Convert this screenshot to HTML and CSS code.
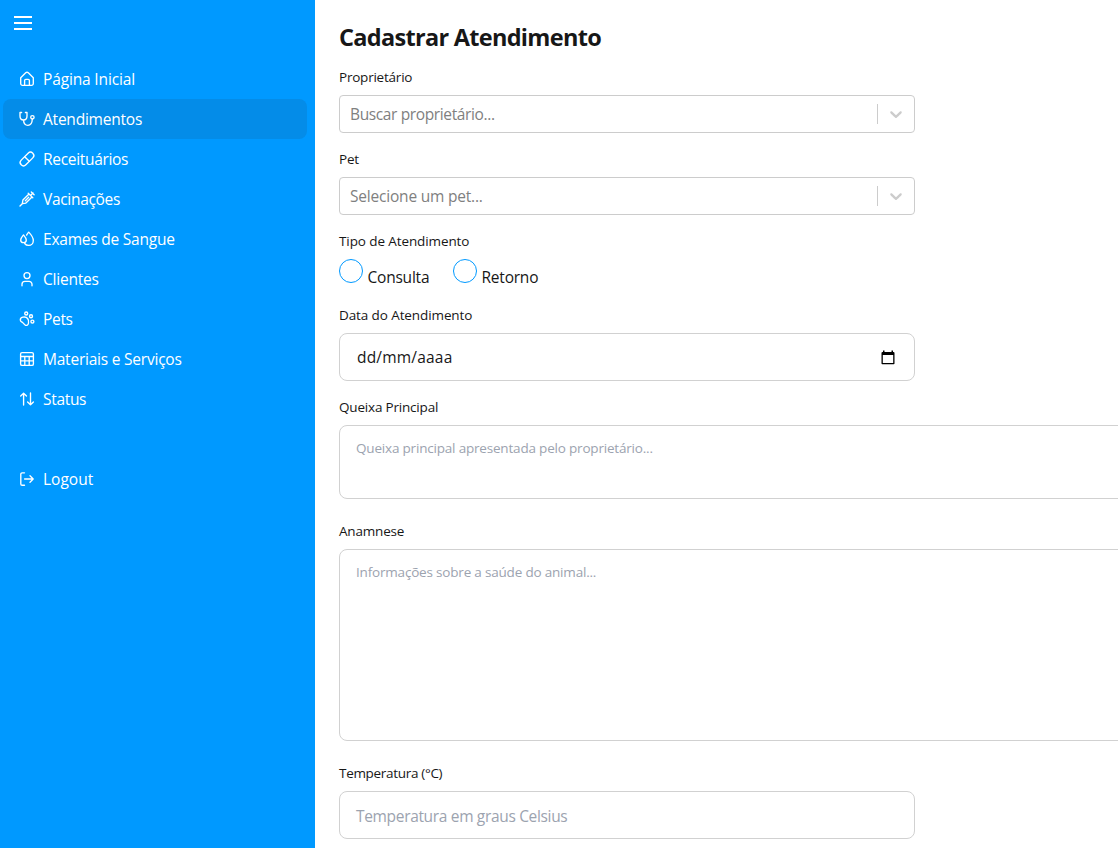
FILE: index.html
```html
<!DOCTYPE html>
<html lang="pt-BR">
<head>
<meta charset="utf-8">
<title>Cadastrar Atendimento</title>
<link rel="stylesheet" href="styles.css">
</head>
<body>
<div class="layout">
  <aside class="sidebar">
    <button class="menu-toggle" aria-label="Menu"><span></span><span></span><span></span></button>
    <nav class="nav">
      <a class="nav-item"><svg class="icon" viewBox="0 0 16 16"><path d="M1.700 6.800 6.700 1.800a1.900 1.900 0 0 1 2.600 0l5 5V12.600a1.800 1.800 0 0 1-1.800 1.800h-9a1.800 1.800 0 0 1-1.800-1.800Z"/><path d="M5.600 14.400V9.600a1.200 1.200 0 0 1 1.200-1.200h2.400a1.200 1.200 0 0 1 1.200 1.200v4.800"/></svg><span>Página Inicial</span></a>
      <a class="nav-item active"><svg class="icon" viewBox="0 0 16 16"><path d="M2.600 1.500H1V5c0 2.500 1.500 4 3.500 4S8 7.500 8 5V1.500H6.400M4.500 9c.2 3.300 1.800 5.300 4.400 5.300 2.700 0 4.200-2 4.400-6.100"/><circle cx="13.400" cy="6.300" r="1.700"/></svg><span class="snug">Atendimentos</span></a>
      <a class="nav-item"><svg class="icon" viewBox="0 0 16 16"><g transform="rotate(-45 8 8)"><rect x="-.2" y="4.700" width="16.400" height="6.600" rx="3.300"/><path d="M8 4.700v6.600"/></g></svg><span class="tight">Receituários</span></a>
      <a class="nav-item"><svg class="icon" viewBox="0 0 16 16"><path d="M1 15 3.300 12.700M3.300 12.700 3.900 9.100 10 3 13 6 6.900 12.100ZM9.200 2.200 13.800 6.800M11.500 4.500 14 2M12.300.9 15.100 3.700M6.300 9.700 9.700 6.300"/></svg><span class="tight">Vacinações</span></a>
      <a class="nav-item"><svg class="icon" viewBox="0 0 16 16"><path d="M4.500 4C3 5.800 1.700 7.300 1.700 8.900a2.800 2.800 0 0 0 5.600 0C7.300 7.300 6 5.800 4.500 4Z"/><path d="M7.600 4.100C8.200 3 8.900 2 9.700 1.100c2.500 2.600 4.600 5.400 4.600 8.300 0 3-2 5-4.600 5-1.700 0-3.200-.8-4-1.900"/></svg><span class="snug">Exames de Sangue</span></a>
      <a class="nav-item"><svg class="icon" viewBox="0 0 16 16"><circle cx="8" cy="4.600" r="3"/><path d="M3 14.800v-1.600a2.900 2.900 0 0 1 2.900-2.900h4.200a2.900 2.900 0 0 1 2.900 2.900v1.600"/></svg><span class="snug">Clientes</span></a>
      <a class="nav-item"><svg class="icon" viewBox="0 0 16 16"><circle cx="7.200" cy="2.500" r="1.500"/><circle cx="12" cy="5.200" r="1.500"/><circle cx="13.400" cy="10.600" r="1.500"/><path d="M3.800 6.200c2-.5 3.700 0 4.800 1.300 1.100 1.400 1.200 2.900.9 4.500-.3 1.800-1.500 2.800-2.900 2.300-1.200-.4-1.600-1.600-2.500-2.400C3.200 11 1.700 10.800 1.400 9.300c-.3-1.400.8-2.700 2.400-3.100Z"/></svg><span class="tight">Pets</span></a>
      <a class="nav-item"><svg class="icon" viewBox="0 0 16 16"><rect x="1.600" y="1.600" width="12.800" height="12.800" rx="1.500"/><path d="M1.600 5.500h12.800M1.600 9.900h12.800M5.800 5.500v8.900M10.200 5.500v8.900"/></svg><span class="snug">Materiais e Serviços</span></a>
      <a class="nav-item"><svg class="icon" viewBox="0 0 16 16"><path d="M4.600 14V2.200M1.700 5.100l2.900-2.900 2.900 2.900M11.500 2v11.800M8.600 10.900l2.900 2.900 2.900-2.900"/></svg><span class="tight">Status</span></a>
      <a class="nav-item logout"><svg class="icon" viewBox="0 0 16 16"><path d="M5.500 1.800H3.100a1.300 1.300 0 0 0-1.300 1.300v9.800a1.300 1.300 0 0 0 1.300 1.300h2.400M5.600 8h8.600M11 4.800 14.200 8 11 11.200"/></svg><span class="wide">Logout</span></a>
    </nav>
  </aside>
  <main class="content">
    <h1>Cadastrar Atendimento</h1>
    <label class="label snug">Proprietário</label>
    <div class="select"><span class="select-text owner">Buscar proprietário...</span><i class="divider"></i><svg class="chevron" viewBox="0 0 20 20"><path d="M4.516 7.548c0.436-0.446 1.043-0.481 1.576 0l3.908 3.747 3.908-3.747c0.533-0.481 1.141-0.446 1.574 0 0.436 0.445 0.408 1.197 0 1.615-0.406 0.418-4.695 4.502-4.695 4.502-0.217 0.223-0.502 0.335-0.787 0.335s-0.570-0.112-0.789-0.335c0 0-4.287-4.084-4.695-4.502s-0.436-1.170 0-1.615z"/></svg></div>
    <label class="label snug">Pet</label>
    <div class="select"><span class="select-text">Selecione um pet...</span><i class="divider"></i><svg class="chevron" viewBox="0 0 20 20"><path d="M4.516 7.548c0.436-0.446 1.043-0.481 1.576 0l3.908 3.747 3.908-3.747c0.533-0.481 1.141-0.446 1.574 0 0.436 0.445 0.408 1.197 0 1.615-0.406 0.418-4.695 4.502-4.695 4.502-0.217 0.223-0.502 0.335-0.787 0.335s-0.570-0.112-0.789-0.335c0 0-4.287-4.084-4.695-4.502s-0.436-1.170 0-1.615z"/></svg></div>
    <label class="label">Tipo de Atendimento</label>
    <div class="radios">
      <label class="radio consulta"><i class="circle"></i><span>Consulta</span></label>
      <label class="radio"><i class="circle"></i><span>Retorno</span></label>
    </div>
    <label class="label">Data do Atendimento</label>
    <div class="field date"><span>dd/mm/aaaa</span><svg class="calendar" viewBox="0 0 14 15"><path fill-rule="evenodd" d="M2 .5h1.500V2h7V.5H12V2h.5a1 1 0 0 1 1 1v10.500a.8.8 0 0 1-.8.8H1.300a.8.8 0 0 1-.8-.8V3a1 1 0 0 1 1-1H2ZM1.800 5v8h10.400V5Z"/></svg></div>
    <label class="label queixa">Queixa Principal</label>
    <div class="area short">Queixa principal apresentada pelo proprietário...</div>
    <label class="label queixa">Anamnese</label>
    <div class="area tall">Informações sobre a saúde do animal...</div>
    <label class="label tight">Temperatura (°C)</label>
    <div class="field temp"><span>Temperatura em graus Celsius</span></div>
  </main>
</div>
</body>
</html>
```
FILE: styles.css
```css
* { box-sizing: border-box; }
body { margin: 0; height: 848px; overflow: hidden; background: #fff; color: #171717; font: 16px/24px "Segoe UI", "Open Sans", "Noto Sans", sans-serif; }
.layout { display: flex; height: 848px; overflow: hidden; }
.sidebar { width: 315px; flex: none; background: #0099ff; color: #fff; padding: 16px 8px 0 3px; }
.menu-toggle { display: flex; flex-direction: column; gap: 4px; width: 18px; margin: 0 0 29px 11px; padding: 0; border: 0; background: none; }
.menu-toggle span { height: 2px; background: #fff; }
.nav { display: flex; flex-direction: column; }
.nav-item { display: flex; align-items: center; gap: 8px; height: 40px; padding-left: 16px; border-radius: 8px; font-size: 15.500px; letter-spacing: -.15px; white-space: nowrap; }
.nav-item.active { background: #048ce8; }
.logout { margin-top: 40px; }
.icon { width: 16px; height: 16px; flex: none; overflow: visible; fill: none; stroke: #fff; stroke-width: 1.350; stroke-linecap: round; stroke-linejoin: round; }
.content { width: 827px; flex: none; padding: 21px 0 0 24px; }
h1 { margin: 0 0 14px; font-size: 23.500px; line-height: 32px; font-weight: 700; letter-spacing: -.7px; white-space: nowrap; }
.label { display: block; height: 20px; margin-bottom: 8px; font-size: 13.500px; line-height: 20px; letter-spacing: -.1px; }
.select { display: flex; align-items: center; width: 576px; height: 38px; margin-bottom: 16px; padding-left: 10px; border: 1px solid #ccc; border-radius: 4px; color: #808080; font-size: 15.500px; letter-spacing: -.2px; }
.select-text { flex: 1; }
.owner { letter-spacing: -.37px; }
.divider { width: 1px; height: 20px; background: #ccc; }
.chevron { width: 20px; height: 20px; margin: 0 8px; fill: #ccc; }
.radios { display: flex; gap: 24px; height: 38px; margin-bottom: 8px; }
.radio { display: flex; gap: 4.500px; font-size: 15.500px; letter-spacing: -.22px; }
.radio span { padding-top: 6px; }
.consulta { width: 90px; }
.circle { width: 24px; height: 24px; flex: none; border: 1px solid #0099ff; border-radius: 50%; }
.field, .area { border: 1px solid #d1d1d1; border-radius: 8px; }
.field { display: flex; align-items: center; width: 576px; height: 48px; padding: 0 19px 0 17px; }
.date { justify-content: space-between; margin-bottom: 16px; font-size: 15.500px; letter-spacing: .2px; }
.calendar { width: 14px; height: 15px; fill: #000; }
.area { width: 803px; padding: 12px 16px; color: #9ca3af; font-size: 13.500px; line-height: 20px; letter-spacing: -.19px; }
.short { height: 74px; margin-bottom: 22px; }
.tall { height: 192px; margin-bottom: 22px; }
.temp { padding: 2px 19px 0 16px; color: #9ca3af; font-size: 15.500px; letter-spacing: -.33px; }
.snug { letter-spacing: -.22px; }
.tight { letter-spacing: -.31px; }
.wide { letter-spacing: 0; }
.queixa { letter-spacing: -.19px; }
```
